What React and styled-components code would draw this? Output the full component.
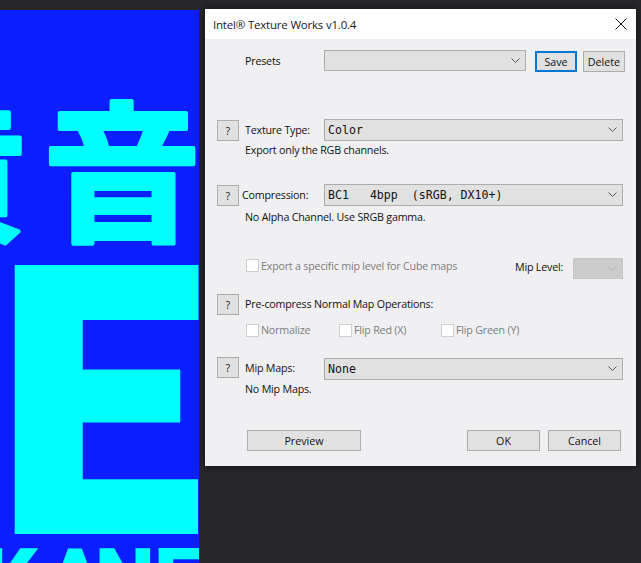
import React from "react";
import styled, { createGlobalStyle } from "styled-components";

const Global = createGlobalStyle`
  html, body {
    margin: 0;
    padding: 0;
    background: #27272a;
  }
`;

const Page = styled.div`
  display: flex;
  align-items: flex-start;
  width: 641px;
  height: 563px;
  overflow: hidden;
  background: #27272a;
  font-family: "Open Sans", "Noto Sans", sans-serif;
  font-size: 10.7px;
  letter-spacing: -0.2px;
  color: #111;
`;

const Poster = styled.svg`
  display: block;
  flex: none;
  width: 199px;
  height: 553px;
  margin-top: 10px;
  background: #0a1eff;
`;

const Dialog = styled.div`
  flex: none;
  width: 431px;
  height: 457px;
  margin: 9px 0 0 6px;
  background: #f0f0f2;
  box-shadow: 0 0 9px rgba(0, 0, 0, 0.55);
`;

const TitleBar = styled.div`
  display: flex;
  align-items: center;
  justify-content: space-between;
  height: 30px;
  padding: 0 9px 0 8px;
  background: #fff;
  font-size: 11.5px;
  color: #1a1a1a;
`;

const Body = styled.div`
  display: flex;
  flex-direction: column;
  padding-left: 12px;
`;

const Row = styled.div`
  display: flex;
  align-items: ${(p) => p.$align || "center"};
  height: ${(p) => p.$h || 22}px;
  margin-top: ${(p) => p.$top || 0}px;
`;

const HelpButton = styled.button`
  flex: none;
  align-self: ${(p) => p.$self || "center"};
  width: 22px;
  height: 21px;
  margin-right: ${(p) => p.$gap ?? 6}px;
  padding: 0;
  border: 1px solid #adadad;
  background: #e1e1e1;
  font: inherit;
  font-size: 10px;
  color: #111;
`;

const Label = styled.span`
  flex: none;
  width: ${(p) => (p.$w ? `${p.$w}px` : "auto")};
  margin-left: ${(p) => p.$left || 0}px;
  padding-bottom: 1px;
  line-height: ${(p) => p.$lh || 16}px;
  white-space: nowrap;
  color: ${(p) => (p.$off ? "#7d7d7d" : "#111")};
`;

const Note = styled.div`
  height: 18px;
  margin-top: ${(p) => p.$top || 0}px;
  margin-left: 28px;
  line-height: 18px;
  white-space: nowrap;
`;

const Combo = styled.div`
  flex: none;
  align-self: ${(p) => p.$self || "auto"};
  display: flex;
  align-items: center;
  justify-content: space-between;
  box-sizing: border-box;
  width: ${(p) => p.$w || 299}px;
  height: ${(p) => p.$high || 22}px;
  margin-left: ${(p) => p.$left || 0}px;
  padding: 0 5px 0 3px;
  border: 1px solid ${(p) => (p.$off ? "#c6c6c6" : "#adadad")};
  background: ${(p) => (p.$off ? "#cccccc" : "#e1e1e1")};
  font-family: "DejaVu Sans Mono", "Liberation Mono", monospace;
  font-size: 11.6px;
  letter-spacing: 0;
  white-space: pre;
  color: #111;
`;

const Chevron = styled.svg`
  flex: none;
  width: 9px;
  height: 6px;
  margin-left: auto;
  fill: none;
  stroke: ${(p) => (p.$off ? "#b4b4b4" : "#555")};
  stroke-width: 1;
`;

const PushButton = styled.button`
  flex: none;
  align-self: ${(p) => p.$self || "auto"};
  box-sizing: border-box;
  width: ${(p) => p.$w}px;
  height: 21px;
  margin-left: ${(p) => p.$left || 0}px;
  padding: 0;
  border: ${(p) => (p.$focus ? "2px solid #0078d7" : "1px solid #adadad")};
  background: #e1e1e1;
  font: inherit;
  color: #111;
`;

const Check = styled.span`
  flex: none;
  box-sizing: border-box;
  width: 13px;
  height: 13px;
  margin-left: ${(p) => p.$left || 0}px;
  margin-right: 2px;
  margin-top: ${(p) => p.$down || 0}px;
  border: 1px solid #cfcfcf;
  background: #fff;
`;

const CloseIcon = styled.svg`
  width: 12px;
  height: 12px;
  fill: none;
  stroke: #111;
  stroke-width: 1;
`;

const Down = ({ off }) => (
  <Chevron $off={off} viewBox="0 0 9 6">
    <path d="M0.5 0.5 L4.5 4.5 L8.5 0.5" />
  </Chevron>
);

const App = () => {
  return (
    <Page>
      <Global />
      <Poster viewBox="0 0 199 553">
        <g fill="#00ffff" stroke="#00ffff" strokeLinejoin="round" strokeWidth="4" fontFamily="'Noto Sans CJK JP', sans-serif" fontWeight="700" fontSize="158">
          <text x="-131" y="0" transform="translate(0 220) scale(1 0.96)">黄</text>
          <text x="43" y="0" transform="translate(0 220) scale(1 0.96)">音</text>
        </g>
        <text transform="translate(-2 521) scale(0.98 1)" fill="#00ffff" stroke="#00ffff" strokeWidth="6" fontFamily="Roboto, sans-serif" fontWeight="900" fontSize="370">E</text>
        <text x="-17 46 95 154" y="599" fill="#00ffff" fontFamily="Roboto, sans-serif" fontWeight="900" fontSize="85">KANE</text>
      </Poster>
      <Dialog>
        <TitleBar>
          <span>Intel® Texture Works v1.0.4</span>
          <CloseIcon viewBox="0 0 12 12">
            <path d="M0.5 0.5 L11.5 11.5 M11.5 0.5 L0.5 11.5" />
          </CloseIcon>
        </TitleBar>
        <Body>
          <Row $top={11}>
            <Label $left={28} $w={79}>Presets</Label>
            <Combo $w={202} $high={21} $self="flex-start"><Down /></Combo>
            <PushButton $w={42} $left={9} $focus $self="flex-end">Save</PushButton>
            <PushButton $w={42} $left={6} $self="flex-end">Delete</PushButton>
          </Row>
          <Row $top={47}>
            <HelpButton $self="flex-end">?</HelpButton>
            <Label $w={79}>Texture Type:</Label>
            <Combo>Color<Down /></Combo>
          </Row>
          <Note>Export only the RGB channels.</Note>
          <Row $top={25}>
            <HelpButton $gap={3} $self="flex-end">?</HelpButton>
            <Label $w={82}>Compression:</Label>
            <Combo>{"BC1   4bpp  (sRGB, DX10+)"}<Down /></Combo>
          </Row>
          <Note $top={2}>No Alpha Channel. Use SRGB gamma.</Note>
          <Row $top={32} $h={21} $align="flex-start">
            <Check $left={29} $down={1} />
            <Label $off $w={254}>Export a specific mip level for Cube maps</Label>
            <Label $w={58} $lh={18}>Mip Level:</Label>
            <Combo $w={50} $high={21} $off><Down off /></Combo>
          </Row>
          <Row $top={15} $h={21}>
            <HelpButton>?</HelpButton>
            <Label>Pre-compress Normal Map Operations:</Label>
          </Row>
          <Row $top={9} $h={13}>
            <Check $left={29} />
            <Label $off $w={78}>Normalize</Label>
            <Check />
            <Label $off $w={87}>Flip Red (X)</Label>
            <Check />
            <Label $off>Flip Green (Y)</Label>
          </Row>
          <Row $top={20} $h={23}>
            <HelpButton $self="flex-start">?</HelpButton>
            <Label $w={79}>Mip Maps:</Label>
            <Combo $self="flex-end">None<Down /></Combo>
          </Row>
          <Note>No Mip Maps.</Note>
          <Row $top={32} $h={21}>
            <PushButton $w={114} $left={30}>Preview</PushButton>
            <PushButton $w={73} $left={106}>OK</PushButton>
            <PushButton $w={73} $left={8}>Cancel</PushButton>
          </Row>
        </Body>
      </Dialog>
    </Page>
  );
};

export default App;
